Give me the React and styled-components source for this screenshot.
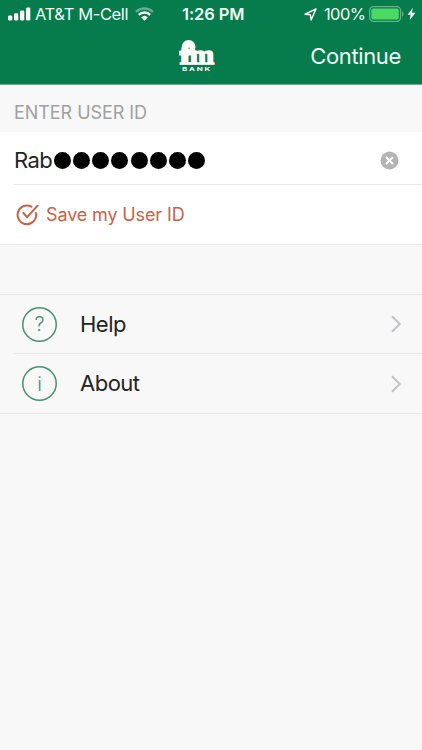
import React from 'react';
import styled, { createGlobalStyle } from 'styled-components';

const GlobalStyle = createGlobalStyle`
  * { box-sizing: border-box; }
  html, body { margin: 0; padding: 0; }
  body { background: #f8f8f8; font-family: Inter, "Liberation Sans", sans-serif; }
  svg { display: block; flex: none; }
`;

const Screen = styled.div`
  width: 422px;
  height: 750px;
  background: #f8f8f8;
  overflow: hidden;
  color: #242424;
`;

const Header = styled.header`
  height: 85px;
  background: #067b4c;
  border-bottom: 1px solid #75a891;
  color: #f2fbf6;
`;

const Label = styled.span`
  font-size: ${(p) => p.$size}px;
  font-weight: ${(p) => p.$weight || 400};
  letter-spacing: ${(p) => p.$track || 0}px;
  line-height: 1.2;
  white-space: nowrap;
`;

const StatusBar = styled.div`
  display: grid;
  grid-template-columns: 182px 1fr 118px;
  align-items: center;
  height: 28px;
  padding-top: 1px;
`;

const StatusGroup = styled.div`
  display: flex;
  align-items: center;
  padding-left: ${(p) => p.$inset || 0}px;
`;

const Carrier = styled(Label)`
  margin: 0 7px 0 4px;
`;

const Percent = styled(Label)`
  width: 45px;
  margin-left: 7px;
`;

const NavBar = styled.nav`
  display: grid;
  grid-template-columns: 1fr auto 1fr;
  align-items: center;
  height: 56px;
  padding: 0 21px;
`;

const NavAction = styled.button`
  grid-column: 3;
  justify-self: end;
  border: 0;
  padding: 0;
  background: none;
  color: inherit;
  font-family: inherit;
  line-height: 0;
`;

const LogoSlot = styled.div`
  grid-column: 2;
  margin-right: 28px;
`;

const SectionTitle = styled.div`
  display: flex;
  align-items: center;
  height: 47px;
  padding: 9px 0 0 14px;
  color: #a0a0a0;
`;

const FormPanel = styled.section`
  background: #fff;
  border-bottom: 1px solid #e7e7e7;
`;

const UserField = styled.div`
  display: flex;
  align-items: center;
  height: 53px;
  margin-left: 14px;
  padding: 4px 23px 0 0;
  border-bottom: 1px solid #e9e9e9;
`;

const FieldText = styled(Label)`
  width: 40px;
  padding-top: 1px;
`;

const Dots = styled.div`
  display: flex;
  flex: 1;
  gap: 2.15px;
  padding-top: 1px;
`;

const Dot = styled.i`
  width: 17px;
  height: 17px;
  border-radius: 50%;
  background: #000;
`;

const SaveRow = styled.div`
  display: flex;
  align-items: center;
  gap: 7px;
  height: 59px;
  padding-left: 16px;
  color: #cb6049;
`;

const Menu = styled.section`
  margin-top: 49px;
  border-top: 1px solid #e6e6e6;
  border-bottom: 1px solid #e6e6e6;
`;

const MenuRow = styled.div`
  display: flex;
  align-items: center;
  height: 59px;
  margin-left: 14px;
  padding: 0 20px 0 8px;
  border-bottom: ${(p) => (p.$divided ? '1px solid #e6e6e9' : '0')};
`;

const MenuName = styled(Label)`
  flex: 1;
  margin-left: 23px;
`;

const Logo = () => (
  <svg width="36" height="34" viewBox="0 0 36 34" fill="#fff">
    <path d="M6.3 17V8" fill="none" stroke="#fff" strokeWidth="5.6" />
    <path d="M0 15.3h15" stroke="#fff" strokeWidth="2.4" />
    <circle cx="9.6" cy="8" r="4.5" fill="none" stroke="#fff" strokeWidth="4.8" />
    <text x=".5" y="25.4" fontFamily="Liberation Serif" fontWeight="700" fontSize="27" stroke="#fff" strokeWidth="1.5" textLength="12" lengthAdjust="spacingAndGlyphs">f</text>
    <text x="10.8" y="25.4" fontFamily="Liberation Serif" fontWeight="700" fontSize="27" stroke="#fff" strokeWidth="1.5" textLength="24.4" lengthAdjust="spacingAndGlyphs">m</text>
    <text x="3" y="32.2" fontFamily="Inter" fontWeight="700" fontSize="5.4" letterSpacing="1.2" textLength="30" lengthAdjust="spacingAndGlyphs">BANK</text>
  </svg>
);

const Signal = () => (
  <svg width="23" height="14" viewBox="0 0 23 14" fill="#fff">
    <rect x="0" y="8.5" width="4.3" height="5" rx="1.2" />
    <rect x="6" y="6.3" width="4.3" height="7.2" rx="1.2" />
    <rect x="12" y="3.6" width="4.3" height="9.9" rx="1.2" />
    <rect x="18" y=".5" width="4.3" height="13" rx="1.2" />
  </svg>
);

const Wifi = () => (
  <svg width="19" height="14" viewBox="0 0 19 14" fill="none" stroke="#fff" strokeWidth="2.4">
    <path d="M1 4.8a12.6 12.6 0 0 1 17 0" opacity=".38" />
    <path d="M3.8 7.8a8.3 8.3 0 0 1 11.4 0" />
    <path d="M6.2 10.4a4.8 4.8 0 0 1 6.6 0L9.5 13.8z" fill="#fff" stroke="none" />
  </svg>
);

const LocationArrow = () => (
  <svg width="13" height="13" viewBox="0 0 13 13" fill="none" stroke="#fff" strokeWidth="1.4" strokeLinejoin="round">
    <path d="M12 1 1 6.2l5.4.6.7 5.2z" />
  </svg>
);

const Battery = () => (
  <svg width="35" height="16" viewBox="0 0 35 16">
    <rect x=".7" y=".7" width="30.8" height="14.6" rx="3.8" fill="none" stroke="#68b18f" strokeWidth="1.3" />
    <rect x="2.4" y="2.4" width="27.4" height="11.2" rx="1.8" fill="#4cd964" />
    <path d="M33 5.3c2 .8 2 4.6 0 5.4z" fill="#68b18f" />
  </svg>
);

const BoltIcon = styled.svg`
  margin-left: 3px;
`;

const Bolt = () => (
  <BoltIcon width="9" height="14" viewBox="0 0 9 14" fill="#fff">
    <path d="M5.8.8.6 7.8h3.1L2.8 13l5.6-7.2H4.9z" />
  </BoltIcon>
);

const ClearIcon = () => (
  <svg width="19" height="19" viewBox="0 0 19 19">
    <circle cx="9.5" cy="9.5" r="9" fill="#b4b4b4" />
    <path d="m6 6 7 7m0-7-7 7" stroke="#fff" strokeWidth="1.9" />
  </svg>
);

const CheckIcon = () => (
  <svg width="23" height="22" viewBox="0 0 23 22" fill="none" stroke="#cb6049" strokeWidth="2" strokeLinecap="round" strokeLinejoin="round">
    <path d="M15.4 2.7A9.3 9.3 0 1 0 20 9" />
    <path d="m7.4 9 3.7 4.2L21.6 1.7" />
  </svg>
);

const MarkCircle = styled.span`
  display: flex;
  align-items: center;
  justify-content: center;
  width: 35px;
  height: 35px;
  box-shadow: inset 0 0 0 1.5px #478f70;
  border-radius: 50%;
  color: #47906f;
`;

const Chevron = () => (
  <svg width="11" height="18" viewBox="0 0 11 18" fill="none" stroke="#c3c3c8" strokeWidth="2">
    <path d="m1 1.2 7.8 7.8L1 16.8" />
  </svg>
);

const items = [
  { mark: '?', name: 'Help', track: -0.5 },
  { mark: 'i', name: 'About', track: -0.5 },
];

export default function App() {
  return (
    <Screen>
      <GlobalStyle />
      <Header>
        <StatusBar>
          <StatusGroup $inset={8}>
            <Signal />
            <Carrier $size={16.5} $track={-0.38}>AT&amp;T M-Cell</Carrier>
            <Wifi />
          </StatusGroup>
          <Label $size={16.5} $weight={600} $track={-0.1}>1:26 PM</Label>
          <StatusGroup>
            <LocationArrow />
            <Percent $size={16.5} $track={-0.6}>100%</Percent>
            <Battery />
            <Bolt />
          </StatusGroup>
        </StatusBar>
        <NavBar>
          <LogoSlot><Logo /></LogoSlot>
          <NavAction><Label $size={22} $track={-0.35}>Continue</Label></NavAction>
        </NavBar>
      </Header>
      <SectionTitle><Label $size={18} $track={-0.05}>ENTER USER ID</Label></SectionTitle>
      <FormPanel>
        <UserField>
          <FieldText $size={22} $track={-0.6}>Rab</FieldText>
          <Dots>{Array.from({ length: 8 }, (_, i) => <Dot key={i} />)}</Dots>
          <ClearIcon />
        </UserField>
        <SaveRow>
          <CheckIcon />
          <Label $size={18} $track={-0.13}>Save my User ID</Label>
        </SaveRow>
      </FormPanel>
      <Menu>
        {items.map((item, i) => (
          <MenuRow key={item.name} $divided={i === 0}>
            <MarkCircle><Label $size={20} $weight={300}>{item.mark}</Label></MarkCircle>
            <MenuName $size={22} $track={item.track}>{item.name}</MenuName>
            <Chevron />
          </MenuRow>
        ))}
      </Menu>
    </Screen>
  );
}
